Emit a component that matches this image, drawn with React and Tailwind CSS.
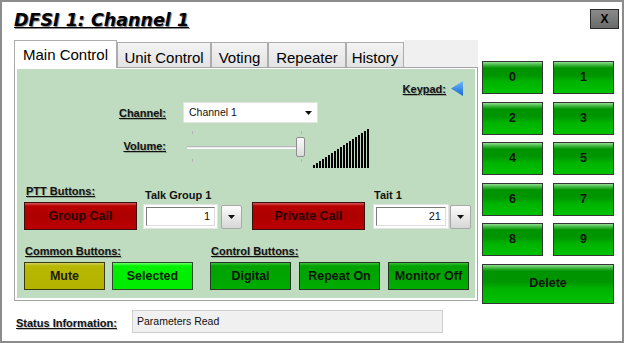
const bars = Array.from({ length: 19 }, (_, i) => 3 + Math.round((i * 36) / 18));

const labelCls =
  "text-[11px] leading-[14px] font-bold underline text-[#111] [text-shadow:1px_1px_0_rgba(0,0,0,0.25)] whitespace-nowrap";

function KeyBtn({ label, wide }) {
  return (
    <button
      className={`${
        wide ? "w-[132px] h-[40px]" : "w-[61px] h-[33px]"
      } border border-[#353535] bg-[linear-gradient(to_bottom,#93dd93_0px,#3fb83f_3px,#009300_6px,#009600_45%,#00b200_62%,#00c200_100%)] text-[12.5px] font-bold text-[#0d160d] flex items-center justify-center`}
    >
      {label}
    </button>
  );
}

function Arrow() {
  return (
    <svg width="7" height="4" viewBox="0 0 7 4">
      <polygon points="0,0 7,0 3.5,4" fill="#111" />
    </svg>
  );
}

function SpinInput({ value, w }) {
  return (
    <div className="flex items-start">
      <div className={`${w} h-[25px] mt-[2px] bg-white border border-[#e4e4e4] p-[2px]`}>
        <div className="h-full border-t border-l border-t-[#7c7c7c] border-l-[#7c7c7c] border-r border-b border-r-[#dcdcdc] border-b-[#dcdcdc] flex items-center justify-end pr-[4px] text-[11px] text-[#111]">
          {value}
        </div>
      </div>
    </div>
  );
}

function DropBtn({ ml }) {
  return (
    <div
      className={`${ml} w-[21px] h-[24px] mt-[3px] rounded-[2px] border border-[#a8a8a8] bg-[linear-gradient(to_bottom,#fdfdfd,#e9e9e9_50%,#d6d6d6)] flex items-center justify-center`}
    >
      <Arrow />
    </div>
  );
}

function App() {
  return (
    <div className="w-[624px] h-[343px] border-2 border-[#8c8c8c] bg-white text-black overflow-hidden font-['Liberation_Sans',Arial,sans-serif]">
      {/* header */}
      <div className="flex justify-between items-start h-[38px] pl-[12px] pr-[3px] pt-[7px]">
        <h1 className="mt-[1px] font-['DejaVu_Sans',sans-serif] font-bold italic text-[17.5px] leading-[20px] underline [text-shadow:1px_1px_0_#8a8a8a]">
          DFSI 1: Channel 1
        </h1>
        <button className="w-[29px] h-[20px] border border-[#2a2a2a] bg-[linear-gradient(to_bottom,#8a8a8a,#6a6a6a)] text-[12px] font-bold text-black flex items-center justify-center">
          X
        </button>
      </div>

      <div className="flex pl-[12px]">
        {/* left column */}
        <div className="w-[464px]">
          <div className="flex items-end h-[27px]">
            <div className="relative z-10 w-[103px] h-[28px] -mb-px bg-white border border-b-0 border-[#acacac] flex items-center justify-center text-[15px] leading-[17px]">
              Main Control
            </div>
            {[
              ["Unit Control", "w-[94px]"],
              ["Voting", "w-[57px]"],
              ["Repeater", "w-[78px]"],
              ["History", "w-[58px]"],
            ].map(([t, w]) => (
              <div
                key={t}
                className={`${w} h-[25px] pt-[4px] border border-b-0 border-[#acacac] bg-[linear-gradient(to_bottom,#f3f3f3,#e3e3e3)] flex items-center justify-center text-[15px] leading-[17px]`}
              >
                {t}
              </div>
            ))}
            <div className="flex-1 h-[27px] bg-[#f0f0f0]" />
          </div>

          {/* panel */}
          <div className="h-[234px] border border-[#a5a5a5] bg-white px-[2px] pt-px pb-[2px]">
            <div className="h-full bg-[#c0dcc0]">
              <div className="h-[33px] pt-[6px] pr-[12px] flex items-center justify-end">
                <span className={labelCls}>Keypad:</span>
                <svg width="12" height="15" viewBox="0 0 12 15" className="ml-[5px]">
                  <defs>
                    <linearGradient id="kp" x1="0" y1="0" x2="0" y2="1">
                      <stop offset="0" stopColor="#6fb8ff" />
                      <stop offset="1" stopColor="#1668cc" />
                    </linearGradient>
                  </defs>
                  <polygon points="12,0 12,15 0,7.5" fill="url(#kp)" />
                </svg>
              </div>

              <div className="h-[21px] flex items-center">
                <div className={`w-[149px] text-right ${labelCls}`}>Channel:</div>
                <div className="ml-[17px] w-[135px] h-[21px] bg-white border border-[#e2e2e2] flex items-center justify-between pl-[5px] pr-[5px] text-[10.5px] text-[#111]">
                  <span>Channel 1</span>
                  <Arrow />
                </div>
              </div>

              <div className="mt-[5px] h-[40px] flex">
                <div className={`w-[149px] pt-[11px] text-right ${labelCls}`}>Volume:</div>
                <div className="relative ml-[17px] w-[127px] h-[40px]">
                  <div className="absolute left-[4px] top-[18px] w-[118px] h-[3px] border-t border-[#b9b9b9] bg-[#ececec] border-b border-b-white" />
                  <div className="absolute left-[9px] top-[3px] w-px h-[3px] bg-[#b4b4b4]" />
                  <div className="absolute left-[9px] top-[31px] w-px h-[3px] bg-[#b4b4b4]" />
                  <div className="absolute left-[118px] top-[3px] w-px h-[3px] bg-[#b4b4b4]" />
                  <div className="absolute left-[118px] top-[31px] w-px h-[3px] bg-[#b4b4b4]" />
                  <div className="absolute left-[113px] top-[9px] w-[9px] h-[20px] rounded-[2px] border border-[#8e8e8e] bg-[linear-gradient(to_bottom,#fbfbfb,#dcdcdc)]" />
                </div>
                <svg width="57" height="39" viewBox="0 0 57 39" className="ml-[3px] self-end">
                  {bars.map((h, i) => (
                    <rect key={i} x={i * 3} y={39 - h} width="2" height={h} fill="#000" />
                  ))}
                </svg>
              </div>

              <div className="mt-[16px] flex">
                <div className="ml-[7px] w-[113px]">
                  <div className={`h-[18px] pl-[2px] ${labelCls}`}>PTT Buttons:</div>
                  <button className="w-full h-[28px] border border-[#3a1010] bg-[linear-gradient(to_bottom,#d45a5a_0px,#b80000_3px,#ae0000_50%,#bb0000_100%)] text-[12.5px] font-bold text-[#2a0000]">
                    Group Call
                  </button>
                </div>
                <div className="ml-[6px]">
                  <div className="h-[18px] pl-[2px] pt-[4px] text-[11px] leading-[14px] font-bold text-[#111]">
                    Talk Group 1
                  </div>
                  <div className="flex">
                    <SpinInput value="1" w="w-[75px]" />
                    <DropBtn ml="ml-[3px]" />
                  </div>
                </div>
                <div className="ml-[10px] w-[113px]">
                  <div className="h-[18px]" />
                  <button className="w-full h-[28px] border border-[#3a1010] bg-[linear-gradient(to_bottom,#d45a5a_0px,#b80000_3px,#ae0000_50%,#bb0000_100%)] text-[12.5px] font-bold text-[#2a0000]">
                    Private Call
                  </button>
                </div>
                <div className="ml-[8px]">
                  <div className="h-[18px] pl-[1px] pt-[4px] text-[11px] leading-[14px] font-bold text-[#111]">
                    Tait 1
                  </div>
                  <div className="flex">
                    <SpinInput value="21" w="w-[76px]" />
                    <DropBtn ml="ml-[1px]" />
                  </div>
                </div>
              </div>

              <div className="mt-[14px] flex">
                <div className={`ml-[8px] w-[186px] ${labelCls}`}>Common Buttons:</div>
                <div className={labelCls}>Control Buttons:</div>
              </div>

              <div className="mt-[4px] flex">
                <button className="ml-[7px] w-[81px] h-[28px] border border-[#3a3a10] bg-[linear-gradient(to_bottom,#d0d060_0px,#b8b800_3px,#b3b300_100%)] text-[12.5px] font-bold text-[#1c1c00]">
                  Mute
                </button>
                <button className="ml-[7px] w-[81px] h-[28px] border border-[#2a4a2a] bg-[linear-gradient(to_bottom,#70ff70_0px,#00f000_3px,#00ec00_100%)] text-[12.5px] font-bold text-[#062006]">
                  Selected
                </button>
                {[
                  ["Digital", "ml-[17px]"],
                  ["Repeat On", "ml-[8px]"],
                  ["Monitor Off", "ml-[8px]"],
                ].map(([t, m]) => (
                  <button
                    key={t}
                    className={`${m} w-[81px] h-[28px] border border-[#263426] bg-[linear-gradient(to_bottom,#3fbf3f_0px,#00a200_3px,#00a600_60%,#00ad00_100%)] text-[12.5px] font-bold text-[#061606]`}
                  >
                    {t}
                  </button>
                ))}
              </div>
            </div>
          </div>

          {/* status */}
          <div className="mt-[9px] h-[23px] flex items-center">
            <div className="w-[118px] pl-[2px]">
              <span className={labelCls}>Status Information:</span>
            </div>
            <div className="w-[311px] h-[23px] border border-[#cfcfcf] bg-[#f0f0f0] flex items-center pl-[4px] text-[10.5px] text-[#111]">
              Parameters Read
            </div>
          </div>
        </div>

        {/* keypad */}
        <div className="ml-[4px] pt-[21px] flex flex-col gap-[7.5px]">
          {[
            ["0", "1"],
            ["2", "3"],
            ["4", "5"],
            ["6", "7"],
            ["8", "9"],
          ].map(([a, b]) => (
            <div key={a} className="flex gap-[10px]">
              <KeyBtn label={a} />
              <KeyBtn label={b} />
            </div>
          ))}
          <KeyBtn label="Delete" wide />
        </div>
      </div>
    </div>
  );
}

export default App;
